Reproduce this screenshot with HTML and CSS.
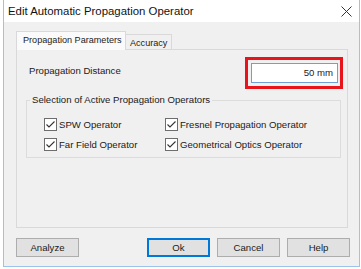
FILE: index.html
```html
<!DOCTYPE html>
<html lang="en">
<head>
<meta charset="UTF-8" />
<title>Edit Automatic Propagation Operator</title>
<link rel="stylesheet" href="styles.css">
</head>
<body>
<div class="window">
    <div class="titlebar">
        <span class="title">Edit Automatic Propagation Operator</span>
        <svg class="close" width="11" height="11" viewBox="0 0 11 11">
            <path d="M0.5 0.5 L10.5 10.5 M10.5 0.5 L0.5 10.5" stroke="#333" stroke-width="1" fill="none" />
        </svg>
    </div>
    <div class="content">
        <div class="tabs">
            <div class="tab active">Propagation Parameters</div>
            <div class="tab">Accuracy</div>
        </div>
        <div class="panel">
            <div class="distance-row">
                <span class="label">Propagation Distance</span>
                <div class="highlight">
                    <div class="textbox">50 mm</div>
                </div>
            </div>
            <fieldset class="group">
                <legend>Selection of Active Propagation Operators</legend>
                <div class="checks">
                    <label class="check"><span class="box"><svg width="11" height="11" viewBox="0 0 11 11"><path d="M1.5 5.5 L4 8 L9.5 2.5" stroke="#333" stroke-width="1.1" fill="none" /></svg></span>SPW Operator</label>
                    <label class="check"><span class="box"><svg width="11" height="11" viewBox="0 0 11 11"><path d="M1.5 5.5 L4 8 L9.5 2.5" stroke="#333" stroke-width="1.1" fill="none" /></svg></span>Fresnel Propagation Operator</label>
                    <label class="check"><span class="box"><svg width="11" height="11" viewBox="0 0 11 11"><path d="M1.5 5.5 L4 8 L9.5 2.5" stroke="#333" stroke-width="1.1" fill="none" /></svg></span>Far Field Operator</label>
                    <label class="check"><span class="box"><svg width="11" height="11" viewBox="0 0 11 11"><path d="M1.5 5.5 L4 8 L9.5 2.5" stroke="#333" stroke-width="1.1" fill="none" /></svg></span>Geometrical Optics Operator</label>
                </div>
            </fieldset>
        </div>
        <div class="buttons">
            <button class="btn">Analyze</button>
            <div class="spacer"></div>
            <button class="btn default">Ok</button>
            <button class="btn">Cancel</button>
            <button class="btn">Help</button>
        </div>
    </div>
</div>
</body>
</html>
```
FILE: styles.css
```css
body {
    margin: 0;
    background: #ffffff;
    font-family: "Liberation Sans", Arial, sans-serif;
    font-size: 9.6px;
    color: #1a1a1a;
}
.window {
    margin-left: 3px;
    width: 355px;
    height: 266px;
    border: 1px solid #9cc3ea;
    border-top: none;
    background: #f0f0f0;
    display: flex;
    flex-direction: column;
}
.titlebar {
    height: 22px;
    background: #ffffff;
    display: flex;
    align-items: center;
    justify-content: space-between;
    padding: 0 7px 0 4px;
    flex-shrink: 0;
}
.title {
    font-size: 11.4px;
    color: #111;
}
.close {
    margin-top: 1px;
}
.content {
    padding: 10px 0 0 12px;
}
.tabs {
    display: flex;
    align-items: flex-end;
    height: 17px;
    position: relative;
    z-index: 1;
    white-space: nowrap;
    font-size: 9.1px;
}
.tab {
    height: 15px;
    border: 1px solid #d9d9d9;
    border-bottom: none;
    background: #f0f0f0;
    line-height: 16px;
    box-sizing: border-box;
}
.tab.active {
    height: 19px;
    width: 110px;
    padding-left: 6px;
    background: #fafafa;
    line-height: 17px;
    margin-bottom: -1px;
}
.tab + .tab {
    border-left: none;
    width: 46px;
    padding-left: 4px;
}
.panel {
    width: 330px;
    height: 177px;
    border: 1px solid #d9d9d9;
    background: #f0f0f0;
}
.distance-row {
    display: flex;
    align-items: center;
    justify-content: space-between;
    margin: 7px 4px 0 12px;
}
.label {
    margin-top: -6px;
    white-space: nowrap;
}
.highlight {
    width: 92px;
    height: 26px;
    border: 3px solid #e8141b;
    display: flex;
    align-items: center;
    justify-content: flex-end;
}
.textbox {
    width: 87px;
    height: 20px;
    border: 1px solid #6f9ed8;
    background: #ffffff;
    margin-right: 2px;
    text-align: right;
    line-height: 18px;
    padding-right: 4px;
    box-sizing: border-box;
}
.group {
    margin: 5px 0 0 9px;
    width: 315px;
    height: 64px;
    padding: 0;
    border: 1px solid #dcdcdc;
    box-sizing: border-box;
}
.group legend {
    margin-left: 3px;
    padding: 0 2px;
    line-height: 12px;
}
.checks {
    display: grid;
    grid-template-columns: 121px auto;
    row-gap: 7px;
    padding: 12px 0 0 17px;
    white-space: nowrap;
}
.check {
    display: flex;
    align-items: center;
    gap: 2px;
    height: 13px;
}
.box {
    width: 11px;
    height: 11px;
    border: 1px solid #6d6d6d;
    background: #ffffff;
    display: flex;
}
.buttons {
    display: flex;
    gap: 7px;
    margin-top: 10px;
    width: 334px;
}
.spacer {
    flex: 1;
}
.btn {
    width: 63px;
    height: 19px;
    border: 1px solid #adadad;
    background: #e1e1e1;
    font-family: "Liberation Sans", Arial, sans-serif;
    font-size: 9.6px;
    color: #1a1a1a;
    padding: 0;
}
.btn.default {
    border: 2px solid #0078d7;
}
```
